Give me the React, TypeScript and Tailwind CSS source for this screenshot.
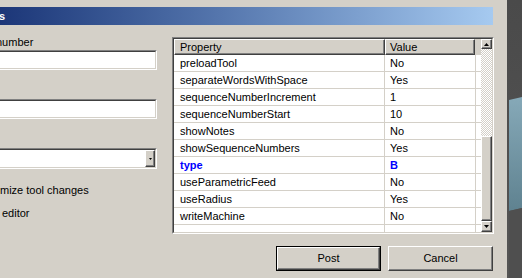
import React from "react";

const rows: { name: string; value: string; bold?: boolean }[] = [
  { name: "preloadTool", value: "No" },
  { name: "separateWordsWithSpace", value: "Yes" },
  { name: "sequenceNumberIncrement", value: "1" },
  { name: "sequenceNumberStart", value: "10" },
  { name: "showNotes", value: "No" },
  { name: "showSequenceNumbers", value: "Yes" },
  { name: "type", value: "B", bold: true },
  { name: "useParametricFeed", value: "No" },
  { name: "useRadius", value: "Yes" },
  { name: "writeMachine", value: "No" },
];

function Sunken({ className, children }: { className: string; children?: React.ReactNode }) {
  return (
    <div className={"border border-t-[#808080] border-l-[#808080] border-r-white border-b-white " + className}>
      <div className="w-full h-full border border-t-[#404040] border-l-[#404040] border-r-[#d4d0c8] border-b-[#d4d0c8] bg-white flex">
        {children}
      </div>
    </div>
  );
}

function Arrow({ up }: { up?: boolean }) {
  return (
    <svg width="5" height="3" viewBox="0 0 5 3">
      {up ? <polygon points="2.5,0 5,3 0,3" fill="#000" /> : <polygon points="0,0 5,0 2.5,3" fill="#000" />}
    </svg>
  );
}

function ScrollButton({ up, className }: { up?: boolean; className: string }) {
  return (
    <div
      className={
        "bg-[#d4d0c8] border border-t-white border-l-white border-r-[#404040] border-b-[#404040] shadow-[inset_-1px_-1px_0_#808080] flex items-center justify-center " +
        className
      }
    >
      <Arrow up={up} />
    </div>
  );
}

export default function App() {
  return (
    <div className="w-[522px] h-[278px] bg-[#d4d0c8] flex overflow-hidden font-['Liberation_Sans',Arial,sans-serif] text-[11px] text-black">
      <div className="w-[507px] flex flex-col pt-[7px]">
        {/* title bar */}
        <div className="w-[493px] h-[18px] bg-gradient-to-r from-[#1c3678] to-[#a6caf0] text-white font-bold flex items-center">
          <span className="-ml-[1px] leading-none">s</span>
        </div>

        <div className="flex">
          {/* left column */}
          <div className="w-[157px] flex flex-col overflow-hidden">
            <div className="mt-[10px] h-[14px] leading-[14px] -ml-[4px] whitespace-nowrap">number</div>
            <Sunken className="mt-[1px] h-[20px] w-[161px] -ml-[4px] shrink-0" />
            <Sunken className="mt-[29px] h-[20px] w-[161px] -ml-[4px] shrink-0" />
            <Sunken className="mt-[29px] h-[21px] w-[161px] -ml-[4px] shrink-0">
              <div className="flex-1" />
              <div className="w-[10px] h-[17px] bg-[#d4d0c8] border border-t-white border-l-white border-r-[#404040] border-b-[#404040] shadow-[inset_-1px_-1px_0_#808080] flex items-center justify-center">
                <svg width="3" height="2" viewBox="0 0 3 2">
                  <polygon points="0,0 3,0 1.5,2" fill="#000" />
                </svg>
              </div>
            </Sunken>
            <div className="mt-[14px] h-[14px] leading-[14px] whitespace-nowrap">mize tool changes</div>
            <div className="mt-[9px] h-[14px] leading-[14px] ml-[2px] whitespace-nowrap">editor</div>
          </div>

          {/* property grid */}
          <div className="ml-[15px] mt-[12px] w-[322px] h-[197px] border border-t-[#808080] border-l-[#808080] border-r-white border-b-white">
            <div className="w-full h-full border border-t-[#404040] border-l-[#404040] border-r-[#d4d0c8] border-b-[#d4d0c8] bg-white flex">
              <div className="w-[307px] flex flex-col">
                <div className="h-[16px] flex bg-[#d4d0c8] shrink-0">
                  <div className="w-[211px] border border-t-white border-l-white border-r-[#404040] border-b-[#404040] shadow-[inset_-1px_-1px_0_#808080] pl-[5px] flex items-center">
                    Property
                  </div>
                  <div className="w-[90px] border border-t-white border-l-white border-r-[#404040] border-b-[#404040] shadow-[inset_-1px_-1px_0_#808080] pl-[4px] flex items-center">
                    Value
                  </div>
                  <div className="flex-1" />
                </div>
                {rows.map((r) => (
                  <div key={r.name} className="h-[17px] flex border-b border-[#d4d0c8] shrink-0">
                    <div
                      className={
                        "w-[211px] border-r border-[#d4d0c8] pl-[6px] flex items-center whitespace-nowrap " +
                        (r.bold ? "font-bold text-[#0000ff]" : "")
                      }
                    >
                      {r.name}
                    </div>
                    <div
                      className={
                        "w-[91px] border-r border-[#d4d0c8] pl-[5px] flex items-center " +
                        (r.bold ? "font-bold text-[#0000ff]" : "")
                      }
                    >
                      {r.value}
                    </div>
                    <div className="flex-1" />
                  </div>
                ))}
                <div className="flex-1 flex">
                  <div className="w-[211px] border-r border-[#d4d0c8]" />
                  <div className="w-[91px] border-r border-[#d4d0c8]" />
                </div>
              </div>
              {/* scrollbar */}
              <div className="w-[11px] flex flex-col">
                <ScrollButton up className="h-[10px] shrink-0" />
                <div className="flex-1 bg-[repeating-conic-gradient(#d4d0c8_0_25%,#ffffff_0_50%)] bg-[length:2px_2px]" />
                <div className="h-[85px] shrink-0 bg-[#d4d0c8] border border-t-white border-l-white border-r-[#404040] border-b-[#404040] shadow-[inset_-1px_-1px_0_#808080]" />
                <ScrollButton className="h-[11px] shrink-0" />
              </div>
            </div>
          </div>
        </div>

        {/* buttons */}
        <div className="w-[493px] flex justify-end gap-[7px] mt-[12px]">
          <div className="w-[105px] h-[25px] border border-black">
            <div className="w-full h-full border border-t-white border-l-white border-r-[#404040] border-b-[#404040] shadow-[inset_-1px_-1px_0_#808080] flex items-center justify-center">
              Post
            </div>
          </div>
          <div className="w-[105px] h-[25px] border border-t-white border-l-white border-r-[#404040] border-b-[#404040] shadow-[inset_-1px_-1px_0_#808080] flex items-center justify-center">
            Cancel
          </div>
        </div>
      </div>

      {/* background scene at right edge */}
      <svg width="15" height="278" viewBox="0 0 15 278" className="shrink-0">
        <defs>
          <linearGradient id="teal" x1="0" y1="0" x2="0" y2="1">
            <stop offset="0" stopColor="#86a9b8" />
            <stop offset="1" stopColor="#5f8290" />
          </linearGradient>
          <linearGradient id="dark" x1="0" y1="0" x2="0" y2="1">
            <stop offset="0" stopColor="#4a4a4a" />
            <stop offset="1" stopColor="#555555" />
          </linearGradient>
        </defs>
        <rect x="0" y="0" width="15" height="278" fill="url(#dark)" />
        <polygon points="2,100 15,97 15,208 2,211" fill="url(#teal)" />
        <polygon points="2,211 15,208 15,278 2,278" fill="#4f4f4f" />
      </svg>
    </div>
  );
}
